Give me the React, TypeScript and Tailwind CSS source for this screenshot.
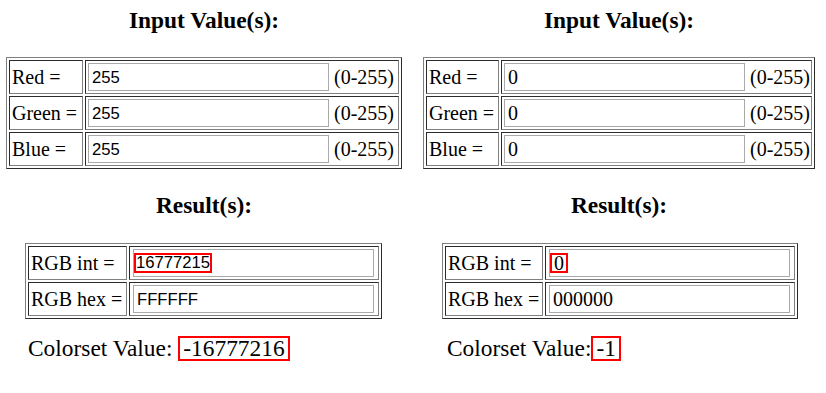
import React from "react";

const serif = "font-['Liberation_Serif','Times_New_Roman',serif]";
const sans = "font-['Liberation_Sans',Arial,sans-serif]";

const outer =
  "border border-t-[#808080] border-l-[#808080] border-r-[#2c2c2c] border-b-[#2c2c2c] p-[2px] flex flex-col gap-[2px]";
const cell =
  "border border-t-[#2c2c2c] border-l-[#2c2c2c] border-r-[#808080] border-b-[#808080] h-[34px] flex items-center shrink-0";
const inputBox =
  "w-[241px] h-[28px] border border-[#a9a9a9] bg-white flex items-center shrink-0";

function InputRow({
  label,
  value,
  labelW,
  cellW,
  sansInput,
}: {
  label: string;
  value: string;
  labelW: string;
  cellW: string;
  sansInput: boolean;
}) {
  return (
    <div className="flex gap-[2px]">
      <div className={`${cell} ${labelW} pl-[2px] whitespace-nowrap`}>{label}</div>
      <div className={`${cell} ${cellW} pl-[2px]`}>
        <div className={`${inputBox} pl-[3px]`}>
          <span className={sansInput ? `${sans} text-[16.67px]` : `${serif} text-[20px]`}>{value}</span>
        </div>
        <span className="ml-[5px] whitespace-nowrap">(0-255)</span>
      </div>
    </div>
  );
}

function Column({
  values,
  sansInput,
  colW,
  labelW,
  cellW,
  resLabelW,
  resCellW,
  intNode,
  hex,
  colorLabelMl,
  colorGap,
  colorValue,
}: {
  values: string[];
  sansInput: boolean;
  colW: string;
  labelW: string;
  cellW: string;
  resLabelW: string;
  resCellW: string;
  intNode: React.ReactNode;
  hex: string;
  colorLabelMl: string;
  colorGap: boolean;
  colorValue: string;
}) {
  const labels = ["Red =", "Green =", "Blue ="];
  return (
    <div className={`${colW} flex flex-col shrink-0`}>
      <div className="h-[57px] pt-[9px] text-center font-bold text-[23.4px] leading-none">
        Input Value(s):
      </div>
      <div className={outer}>
        {labels.map((l, i) => (
          <InputRow key={l} label={l} value={values[i]} labelW={labelW} cellW={cellW} sansInput={sansInput} />
        ))}
      </div>
      <div className="mt-[25px] h-[49px] text-center font-bold text-[23.4px] leading-none">Result(s):</div>
      <div className="ml-[19px] flex flex-col">
        <div className={`${outer} self-start`}>
          <div className="flex gap-[2px]">
            <div className={`${cell} ${resLabelW} pl-[2px] whitespace-nowrap`}>RGB int =</div>
            <div className={`${cell} ${resCellW} pl-[3px]`}>
              <div className={inputBox}>{intNode}</div>
            </div>
          </div>
          <div className="flex gap-[2px]">
            <div className={`${cell} ${resLabelW} pl-[2px] whitespace-nowrap`}>RGB hex =</div>
            <div className={`${cell} ${resCellW} pl-[3px]`}>
              <div className={`${inputBox} pl-[3px]`}>
                <span className={sansInput ? `${sans} text-[16.67px]` : `${serif} text-[20px]`}>{hex}</span>
              </div>
            </div>
          </div>
        </div>
        <div className={`mt-[17px] h-[25px] flex items-center text-[23.4px] leading-[25px] ${colorLabelMl}`}>
          <span className="whitespace-pre">{colorGap ? "Colorset Value: " : "Colorset Value:"}</span>
          <span className="inline-block h-[25px] border-2 border-[#ff0000] leading-[21px] px-[3px]">{colorValue}</span>
        </div>
      </div>
    </div>
  );
}

export default function App() {
  return (
    <div className={`w-[826px] h-[393px] bg-white text-black ${serif} text-[20px] flex`}>
      <div className="ml-[6px]">
        <Column
          values={["255", "255", "255"]}
          sansInput={true}
          colW="w-[396px]"
          labelW="w-[74px]"
          cellW="w-[314px]"
          resLabelW="w-[99px]"
          resCellW="w-[250px]"
          intNode={
            <span className={`${sans} text-[16.67px] inline-block h-[20px] leading-[16px] border-2 border-[#ff0000]`}>
              16777215
            </span>
          }
          hex="FFFFFF"
          colorLabelMl="ml-[3px]"
          colorGap={true}
          colorValue="-16777216"
        />
      </div>
      <div className="ml-[21px]">
        <Column
          values={["0", "0", "0"]}
          sansInput={false}
          colW="w-[392px]"
          labelW="w-[73px]"
          cellW="w-[311px]"
          resLabelW="w-[98px]"
          resCellW="w-[250px]"
          intNode={
            <span className={`${serif} text-[20px] inline-block h-[20px] leading-[16px] border-2 border-[#ff0000] px-[2px]`}>
              0
            </span>
          }
          hex="000000"
          colorLabelMl="ml-[5px]"
          colorGap={false}
          colorValue="-1"
        />
      </div>
    </div>
  );
}
